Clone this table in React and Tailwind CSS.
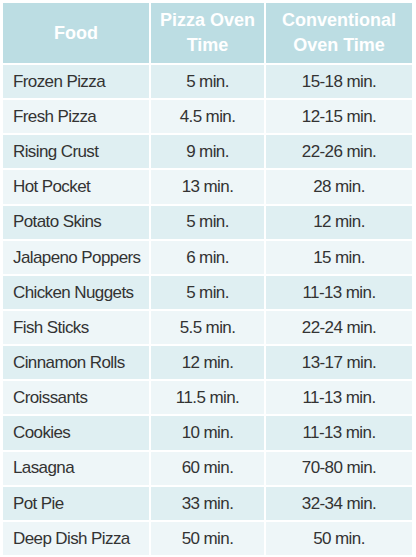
const rows = [
  ["Frozen Pizza", "5 min.", "15-18 min."],
  ["Fresh Pizza", "4.5 min.", "12-15 min."],
  ["Rising Crust", "9 min.", "22-26 min."],
  ["Hot Pocket", "13 min.", "28 min."],
  ["Potato Skins", "5 min.", "12 min."],
  ["Jalapeno Poppers", "6 min.", "15 min."],
  ["Chicken Nuggets", "5 min.", "11-13 min."],
  ["Fish Sticks", "5.5 min.", "22-24 min."],
  ["Cinnamon Rolls", "12 min.", "13-17 min."],
  ["Croissants", "11.5 min.", "11-13 min."],
  ["Cookies", "10 min.", "11-13 min."],
  ["Lasagna", "60 min.", "70-80 min."],
  ["Pot Pie", "33 min.", "32-34 min."],
  ["Deep Dish Pizza", "50 min.", "50 min."],
];

export default function App() {
  return (
    <div className="w-[416px] h-[557px] bg-white pt-[3px] pl-[3px] pr-[4px] font-['Liberation_Sans',Arial,sans-serif]">
      <div className="grid grid-cols-[146px_113px_146px] gap-[2px] bg-white">
        <div className="h-[60px] bg-[#bcdde3] flex items-center justify-center text-white font-bold text-[18px] leading-[22px] text-center">
          Food
        </div>
        <div className="h-[60px] bg-[#bcdde3] flex items-center justify-center text-white font-bold text-[18px] leading-[25px] text-center">
          Pizza Oven<br />Time
        </div>
        <div className="h-[60px] bg-[#bcdde3] flex items-center justify-center text-white font-bold text-[18px] leading-[25px] text-center">
          Conventional<br />Oven Time
        </div>
        {rows.map((r, i) => {
          const bg = i % 2 === 0 ? "bg-[#dfeff2]" : "bg-[#eef6f8]";
          return [
            <div key={i + "a"} className={`h-[33.15px] ${bg} flex items-center pl-[10px] text-[17px] tracking-[-0.6px] text-[#333]`}>
              {r[0]}
            </div>,
            <div key={i + "b"} className={`h-[33.15px] ${bg} flex items-center justify-center text-[17px] tracking-[-0.6px] text-[#333]`}>
              {r[1]}
            </div>,
            <div key={i + "c"} className={`h-[33.15px] ${bg} flex items-center justify-center text-[17px] tracking-[-0.6px] text-[#333]`}>
              {r[2]}
            </div>,
          ];
        })}
      </div>
    </div>
  );
}
